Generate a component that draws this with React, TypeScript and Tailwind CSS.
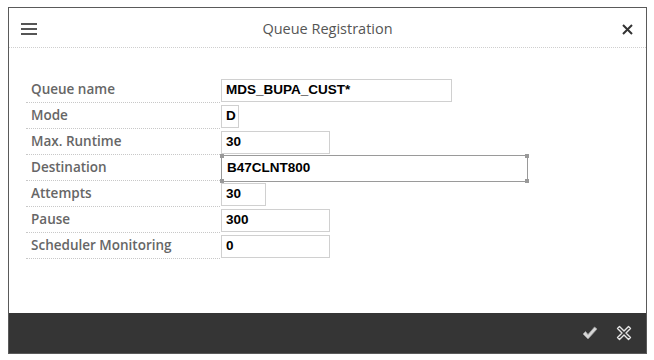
import React from 'react'

interface Field {
  label: string
  value: string
  width: number
  focused?: boolean
}

const fields: Field[] = [
  { label: 'Queue name', value: 'MDS_BUPA_CUST*', width: 231 },
  { label: 'Mode', value: 'D', width: 18 },
  { label: 'Max. Runtime', value: '30', width: 109 },
  { label: 'Destination', value: 'B47CLNT800', width: 307, focused: true },
  { label: 'Attempts', value: '30', width: 45 },
  { label: 'Pause', value: '300', width: 109 },
  { label: 'Scheduler Monitoring', value: '0', width: 109 },
]

function Handle({ className }: { className: string }) {
  return <span className={`absolute w-[4px] h-[4px] bg-[#999] ${className}`} />
}

function FieldRow({ field }: { field: Field }) {
  return (
    <div className="flex h-[26px]">
      <div className="w-[194px] shrink-0 flex items-center pl-[5px] border-b border-dotted border-[#c8c8c8] text-[13.5px] font-semibold text-[#666]">
        {field.label}
      </div>
      <div className="flex items-center pl-[1px]">
        {field.focused ? (
          <div
            className="relative h-[27px] flex items-center pl-[5px] border border-[#9a9a9a] text-[13.5px] font-bold text-black"
            style={{ width: field.width, fontFamily: '"Liberation Sans", Arial, sans-serif' }}
          >
            {field.value}
            <Handle className="-left-[2px] -top-[2px]" />
            <Handle className="-right-[2px] -top-[2px]" />
            <Handle className="-left-[2px] -bottom-[2px]" />
            <Handle className="-right-[2px] -bottom-[2px]" />
          </div>
        ) : (
          <div
            className="h-[23px] flex items-center pl-[4px] border border-[#d0d0d0] text-[13.5px] font-bold text-black"
            style={{ width: field.width, fontFamily: '"Liberation Sans", Arial, sans-serif' }}
          >
            {field.value}
          </div>
        )}
      </div>
    </div>
  )
}

export default function App() {
  return (
    <div
      className="w-[654px] h-[360px] bg-white pt-[7px] pl-[8px]"
      style={{ fontFamily: '"Open Sans", "Noto Sans", sans-serif' }}
    >
      <div className="w-[639px] h-[347px] border border-[#5a5a5a] flex flex-col">
        {/* Header */}
        <div className="h-[40px] shrink-0 grid grid-cols-[40px_1fr_40px] items-center px-[12px] pt-[3px] border-b border-dotted border-[#cfcfcf]">
          <svg width="16" height="12" viewBox="0 0 16 12" className="text-[#555]">
            <rect x="0" y="0" width="16" height="2" fill="currentColor" />
            <rect x="0" y="5" width="16" height="2" fill="currentColor" />
            <rect x="0" y="10" width="16" height="2" fill="currentColor" />
          </svg>
          <span className="text-center text-[14.5px] text-[#555]">Queue Registration</span>
          <div className="flex justify-end">
            <svg width="11" height="11" viewBox="0 0 11 11" className="mr-[1px]">
              <path d="M1 1 L10 10 M10 1 L1 10" stroke="#333" strokeWidth="2" />
            </svg>
          </div>
        </div>

        {/* Form */}
        <div className="flex-1 pt-[29px] pl-[17px]">
          {fields.map((f) => (
            <FieldRow key={f.label} field={f} />
          ))}
        </div>

        {/* Footer */}
        <div className="h-[40px] shrink-0 bg-[#353535] flex items-center justify-end gap-[18px] pr-[14px]">
          <svg width="16" height="14" viewBox="0 0 16 14">
            <path
              d="M1 8 L3.5 5.5 L6 8.5 L12.5 1 L15 3 L6 13 Z"
              fill="#d6d6d6"
              stroke="#9a9a9a"
              strokeWidth="0.8"
              strokeLinejoin="round"
            />
          </svg>
          <svg width="16" height="16" viewBox="0 0 16 16">
            <path
              d="M1.5 3.5 L3.5 1.5 L8 6 L12.5 1.5 L14.5 3.5 L10 8 L14.5 12.5 L12.5 14.5 L8 10 L3.5 14.5 L1.5 12.5 L6 8 Z"
              fill="none"
              stroke="#e6e6e6"
              strokeWidth="1.4"
              strokeLinejoin="round"
            />
          </svg>
        </div>
      </div>
    </div>
  )
}
